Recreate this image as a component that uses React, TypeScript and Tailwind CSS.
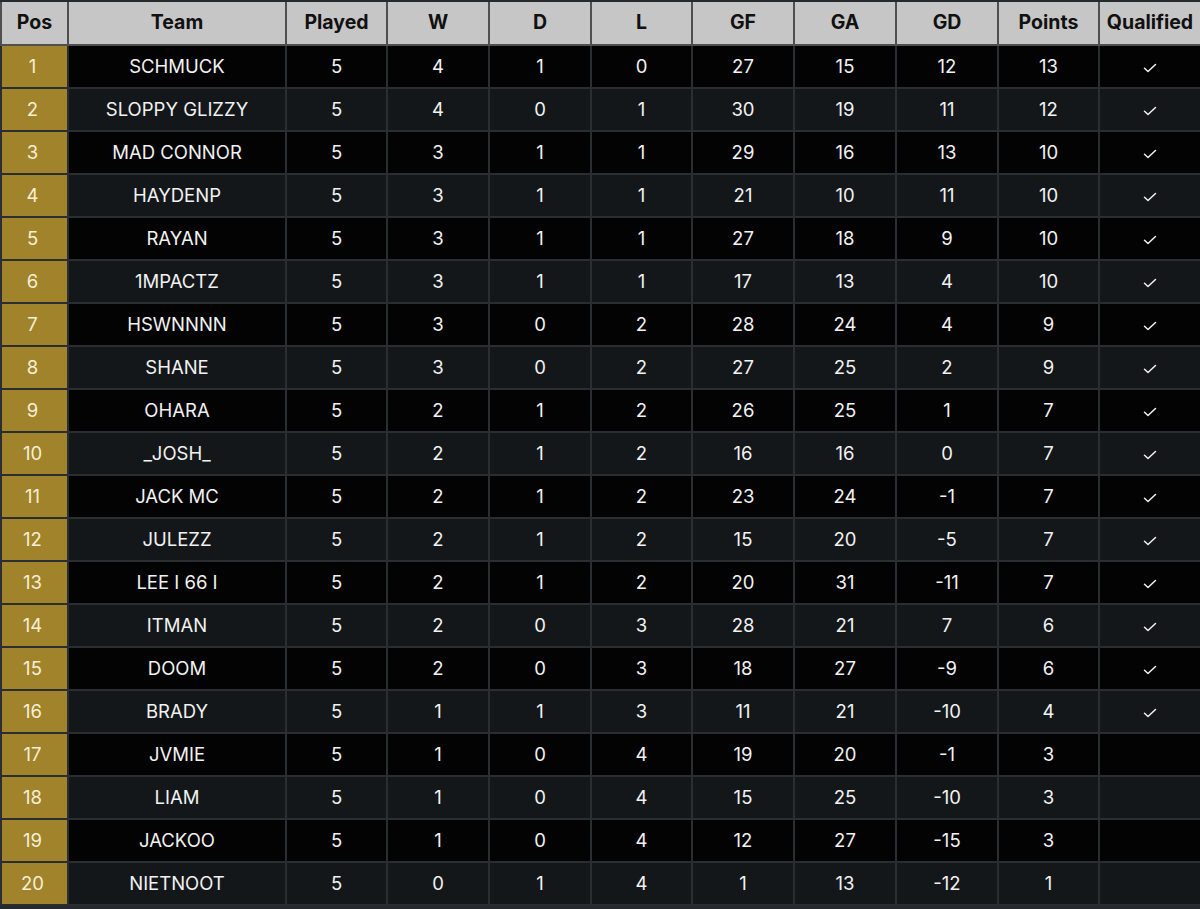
import React from "react";

type Row = {
  team: string;
  played: number;
  w: number;
  d: number;
  l: number;
  gf: number;
  ga: number;
  gd: number;
  points: number;
  qualified: boolean;
};

const rows: Row[] = [
  { team: "SCHMUCK", played: 5, w: 4, d: 1, l: 0, gf: 27, ga: 15, gd: 12, points: 13, qualified: true },
  { team: "SLOPPY GLIZZY", played: 5, w: 4, d: 0, l: 1, gf: 30, ga: 19, gd: 11, points: 12, qualified: true },
  { team: "MAD CONNOR", played: 5, w: 3, d: 1, l: 1, gf: 29, ga: 16, gd: 13, points: 10, qualified: true },
  { team: "HAYDENP", played: 5, w: 3, d: 1, l: 1, gf: 21, ga: 10, gd: 11, points: 10, qualified: true },
  { team: "RAYAN", played: 5, w: 3, d: 1, l: 1, gf: 27, ga: 18, gd: 9, points: 10, qualified: true },
  { team: "1MPACTZ", played: 5, w: 3, d: 1, l: 1, gf: 17, ga: 13, gd: 4, points: 10, qualified: true },
  { team: "HSWNNNN", played: 5, w: 3, d: 0, l: 2, gf: 28, ga: 24, gd: 4, points: 9, qualified: true },
  { team: "SHANE", played: 5, w: 3, d: 0, l: 2, gf: 27, ga: 25, gd: 2, points: 9, qualified: true },
  { team: "OHARA", played: 5, w: 2, d: 1, l: 2, gf: 26, ga: 25, gd: 1, points: 7, qualified: true },
  { team: "_JOSH_", played: 5, w: 2, d: 1, l: 2, gf: 16, ga: 16, gd: 0, points: 7, qualified: true },
  { team: "JACK MC", played: 5, w: 2, d: 1, l: 2, gf: 23, ga: 24, gd: -1, points: 7, qualified: true },
  { team: "JULEZZ", played: 5, w: 2, d: 1, l: 2, gf: 15, ga: 20, gd: -5, points: 7, qualified: true },
  { team: "LEE I 66 I", played: 5, w: 2, d: 1, l: 2, gf: 20, ga: 31, gd: -11, points: 7, qualified: true },
  { team: "ITMAN", played: 5, w: 2, d: 0, l: 3, gf: 28, ga: 21, gd: 7, points: 6, qualified: true },
  { team: "DOOM", played: 5, w: 2, d: 0, l: 3, gf: 18, ga: 27, gd: -9, points: 6, qualified: true },
  { team: "BRADY", played: 5, w: 1, d: 1, l: 3, gf: 11, ga: 21, gd: -10, points: 4, qualified: true },
  { team: "JVMIE", played: 5, w: 1, d: 0, l: 4, gf: 19, ga: 20, gd: -1, points: 3, qualified: false },
  { team: "LIAM", played: 5, w: 1, d: 0, l: 4, gf: 15, ga: 25, gd: -10, points: 3, qualified: false },
  { team: "JACKOO", played: 5, w: 1, d: 0, l: 4, gf: 12, ga: 27, gd: -15, points: 3, qualified: false },
  { team: "NIETNOOT", played: 5, w: 0, d: 1, l: 4, gf: 1, ga: 13, gd: -12, points: 1, qualified: false },
];

const headers = ["Pos", "Team", "Played", "W", "D", "L", "GF", "GA", "GD", "Points", "Qualified"];
const widths = [67, 218, 101, 102, 102, 101, 102, 102, 102, 101, 102];

function Tick() {
  return (
    <svg width="14" height="10" viewBox="0 0 14 10" className="inline-block" aria-hidden>
      <path d="M1.5 5.2 L5 8.5 L12.5 1.5" fill="none" stroke="#f2f2f2" strokeWidth="1.5" strokeLinecap="round" strokeLinejoin="round" />
    </svg>
  );
}

export default function App() {
  return (
    <div
      className="w-[1200px] h-[909px] bg-[#26292d] pt-[2px] overflow-hidden"
      style={{ fontFamily: "Inter, 'Liberation Sans', sans-serif" }}
    >
      <table className="w-[1200px] table-fixed border-collapse text-[18.5px]">
        <colgroup>
          {widths.map((w, i) => (
            <col key={i} style={{ width: w }} />
          ))}
        </colgroup>
        <thead>
          <tr className="h-[43px] bg-[#c6c6c6]">
            {headers.map((h) => (
              <th
                key={h}
                className="border-2 border-[#4f4f4f] border-t-0 text-center text-[19.5px] font-bold text-[#111] p-0"
              >
                {h}
              </th>
            ))}
          </tr>
        </thead>
        <tbody>
          {rows.map((r, i) => {
            const rowBg = i % 2 === 0 ? "bg-[#030303]" : "bg-[#14171a]";
            const cells = [r.played, r.w, r.d, r.l, r.gf, r.ga, r.gd, r.points];
            return (
              <tr key={r.team} className={`h-[43px] ${rowBg}`}>
                <td className="border-2 border-[#2a2d31] bg-[#a0832a] text-center text-[#f7efd6] p-0 pr-[4px]">
                  {i + 1}
                </td>
                <td className="border-2 border-[#2a2d31] text-center text-[#f2f2f2] p-0">{r.team}</td>
                {cells.map((v, j) => (
                  <td key={j} className="border-2 border-[#2a2d31] text-center text-[#f2f2f2] p-0">
                    {v}
                  </td>
                ))}
                <td className="border-2 border-[#2a2d31] text-center p-0">{r.qualified ? <Tick /> : null}</td>
              </tr>
            );
          })}
        </tbody>
      </table>
    </div>
  );
}
